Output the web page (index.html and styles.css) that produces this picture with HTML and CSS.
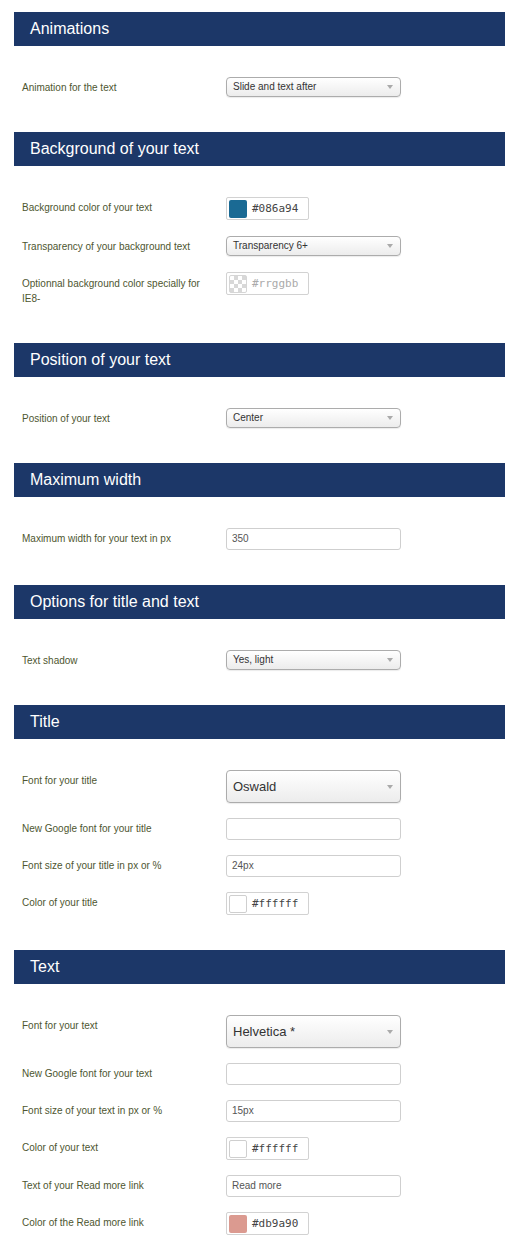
FILE: index.html
```html
<!DOCTYPE html>
<html>
<head>
<meta charset="utf-8">
<link rel="stylesheet" href="styles.css">
</head>
<body>
<div class="page">

  <section class="sec">
    <h2 class="head">Animations</h2>
    <div class="rows">
      <div class="row"><div class="lbl">Animation for the text</div><div class="sel">Slide and text after<span class="arr"></span></div></div>
    </div>
  </section>

  <section class="sec">
    <h2 class="head">Background of your text</h2>
    <div class="rows loose">
      <div class="row"><div class="lbl">Background color of your text</div><div class="color"><span class="sw" style="background:#1a6a94"></span><span class="hex">#086a94</span></div></div>
      <div class="row"><div class="lbl">Transparency of your background text</div><div class="sel">Transparency 6+<span class="arr"></span></div></div>
      <div class="row"><div class="lbl wrap">Optionnal background color specially for IE8-</div><div class="color"><span class="sw check"></span><span class="hex ph">#rrggbb</span></div></div>
    </div>
  </section>

  <section class="sec">
    <h2 class="head">Position of your text</h2>
    <div class="rows">
      <div class="row"><div class="lbl">Position of your text</div><div class="sel">Center<span class="arr"></span></div></div>
    </div>
  </section>

  <section class="sec">
    <h2 class="head">Maximum width</h2>
    <div class="rows">
      <div class="row"><div class="lbl">Maximum width for your text in px</div><div class="inp">350</div></div>
    </div>
  </section>

  <section class="sec">
    <h2 class="head">Options for title and text</h2>
    <div class="rows">
      <div class="row"><div class="lbl">Text shadow</div><div class="sel">Yes, light<span class="arr"></span></div></div>
    </div>
  </section>

  <section class="sec">
    <h2 class="head">Title</h2>
    <div class="rows">
      <div class="row"><div class="lbl">Font for your title</div><div class="sel big">Oswald<span class="arr"></span></div></div>
      <div class="row"><div class="lbl">New Google font for your title</div><div class="inp"></div></div>
      <div class="row"><div class="lbl">Font size of your title in px or %</div><div class="inp">24px</div></div>
      <div class="row"><div class="lbl">Color of your title</div><div class="color"><span class="sw white"></span><span class="hex">#ffffff</span></div></div>
    </div>
  </section>

  <section class="sec">
    <h2 class="head">Text</h2>
    <div class="rows">
      <div class="row"><div class="lbl">Font for your text</div><div class="sel big">Helvetica *<span class="arr"></span></div></div>
      <div class="row"><div class="lbl">New Google font for your text</div><div class="inp"></div></div>
      <div class="row"><div class="lbl">Font size of your text in px or %</div><div class="inp">15px</div></div>
      <div class="row"><div class="lbl">Color of your text</div><div class="color"><span class="sw white"></span><span class="hex">#ffffff</span></div></div>
      <div class="row"><div class="lbl">Text of your Read more link</div><div class="inp">Read more</div></div>
      <div class="row"><div class="lbl">Color of the Read more link</div><div class="color"><span class="sw" style="background:#db9a90"></span><span class="hex">#db9a90</span></div></div>
    </div>
  </section>

</div>
</body>
</html>
```

FILE: styles.css
```css
* { box-sizing: border-box; }
html, body { margin: 0; padding: 0; background: #fff; }
body { font-family: "Liberation Sans", Arial, sans-serif; }

.page {
  padding: 12px 0 0 14px;
  display: flex;
  flex-direction: column;
}

.head {
  margin: 0;
  height: 34px;
  background: #1c3768;
  color: #fff;
  font-weight: normal;
  font-size: 16px;
  line-height: 34px;
  padding-left: 16px;
}

.rows {
  display: flex;
  flex-direction: column;
  gap: 15px;
  padding: 31px 0 35px 8px;
}
.rows.loose { gap: 16px; }

.row {
  display: grid;
  grid-template-columns: 204px 175px;
  align-items: start;
}

.lbl {
  font-size: 10px;
  line-height: 15px;
  padding-top: 3px;
  padding-right: 10px;
  color: #4e5630;
}
.lbl.wrap {
  padding-top: 4px;
  padding-bottom: 2px;
}

.sel {
  position: relative;
  height: 20px;
  border: 1px solid #acacac;
  border-radius: 4px;
  background: linear-gradient(#ffffff, #ececec);
  box-shadow: 0 1px 1px rgba(0,0,0,0.08);
  font-size: 10px;
  line-height: 18px;
  color: #333;
  padding-left: 6px;
}
.sel.big {
  height: 33px;
  line-height: 31px;
  font-size: 13px;
}
.arr {
  position: absolute;
  right: 7px;
  top: 50%;
  margin-top: -2px;
  width: 0; height: 0;
  border-left: 3px solid transparent;
  border-right: 3px solid transparent;
  border-top: 4px solid #aaa;
}

.inp {
  height: 22px;
  border: 1px solid #cfcfcf;
  border-radius: 3px;
  font-size: 10px;
  line-height: 20px;
  color: #555;
  padding-left: 5px;
}

.color {
  width: 83px;
  height: 23px;
  border: 1px solid #d2d2d2;
  border-radius: 2px;
  display: flex;
  align-items: center;
  gap: 5px;
  padding-left: 2px;
}
.sw {
  width: 18px;
  height: 18px;
  border-radius: 2px;
  flex: none;
}
.sw.white {
  background: #fff;
  border: 1px solid #cfcfcf;
}
.sw.check {
  border: 1px solid #d6d6d6;
  background-color: #fff;
  background-image: conic-gradient(#d8d8d8 25%, #fff 25% 50%, #d8d8d8 50% 75%, #fff 75%);
  background-size: 8px 8px;
}
.hex {
  font-family: "DejaVu Sans Mono", monospace;
  font-size: 11px;
  color: #444;
}
.hex.ph { color: #aaa; }
```
